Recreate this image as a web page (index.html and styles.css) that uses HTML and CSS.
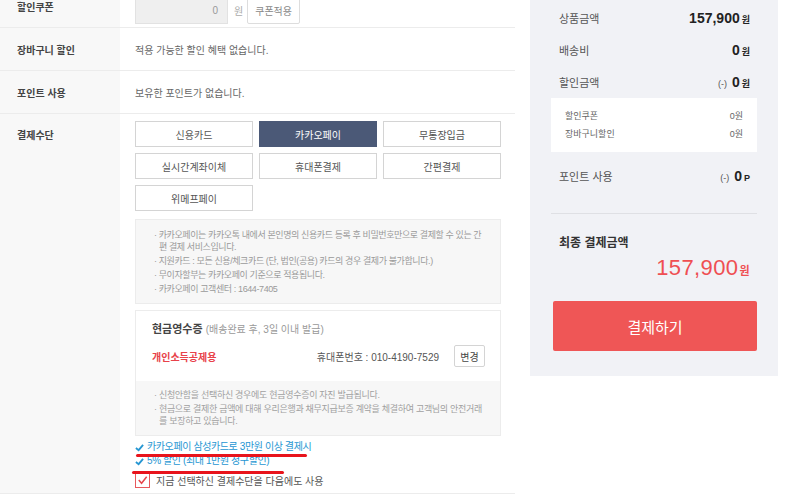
FILE: index.html
```html
<!DOCTYPE html>
<html lang="ko">
<head>
    <meta charset="UTF-8">
    <title>주문서 작성</title>
    <link rel="stylesheet" href="styles.css">
</head>
<body>
    <div class="page">
        <!-- 주문 정보 -->
        <div class="order">
            <div class="row">
                <div class="row-label">할인쿠폰</div>
                <div class="row-body">
                    <span class="coupon-input">0</span>
                    <span class="unit">원</span>
                    <button class="btn-small">쿠폰적용</button>
                </div>
            </div>
            <div class="row">
                <div class="row-label">장바구니 할인</div>
                <div class="row-body text">적용 가능한 할인 혜택 없습니다.</div>
            </div>
            <div class="row">
                <div class="row-label">포인트 사용</div>
                <div class="row-body text">보유한 포인트가 없습니다.</div>
            </div>
            <div class="row pay-row">
                <div class="row-label">결제수단</div>
                <div class="row-body pay-body">
                    <div class="pay-grid">
                        <button class="pay-btn">신용카드</button>
                        <button class="pay-btn active">카카오페이</button>
                        <button class="pay-btn">무통장입금</button>
                        <button class="pay-btn">실시간계좌이체</button>
                        <button class="pay-btn">휴대폰결제</button>
                        <button class="pay-btn">간편결제</button>
                        <button class="pay-btn">위메프페이</button>
                    </div>

                    <ul class="info-box">
                        <li>· 카카오페이는 카카오톡 내에서 본인명의 신용카드 등록 후 비밀번호만으로 결제할 수 있는 간편 결제 서비스입니다.</li>
                        <li>· 지원카드 : 모든 신용/체크카드 (단, 법인(공용) 카드의 경우 결제가 불가합니다.)</li>
                        <li>· 무이자할부는 카카오페이 기준으로 적용됩니다.</li>
                        <li>· 카카오페이 고객센터 : 1644-7405</li>
                    </ul>

                    <div class="receipt">
                        <div class="receipt-top">
                            <div class="receipt-title">현금영수증 <span>(배송완료 후, 3일 이내 발급)</span></div>
                            <div class="receipt-line">
                                <span class="receipt-type">개인소득공제용</span>
                                <span class="receipt-phone">휴대폰번호 : 010-4190-7529</span>
                                <button class="btn-change">변경</button>
                            </div>
                        </div>
                        <ul class="receipt-notes">
                            <li>· 신청안함을 선택하신 경우에도 현금영수증이 자진 발급됩니다.</li>
                            <li>· 현금으로 결제한 금액에 대해 우리은행과 채무지급보증 계약을 체결하여 고객님의 안전거래를 보장하고 있습니다.</li>
                        </ul>
                    </div>

                    <div class="promo">
                        <p><svg class="tick" viewBox="0 0 10 10"><path d="M1 5.5 L4 8 L9 2" /></svg>카카오페이 삼성카드로 3만원 이상 결제시</p>
                        <p><svg class="tick" viewBox="0 0 10 10"><path d="M1 5.5 L4 8 L9 2" /></svg>5% 할인 (최대 1만원 청구할인)</p>
                        <span class="mark mark-1"></span>
                        <span class="mark mark-2"></span>
                    </div>
                    <label class="save-check">
                        <span class="checkbox"><svg viewBox="0 0 14 14"><path d="M3 6.5 L6 10 L11.5 3" /></svg></span>
                        지금 선택하신 결제수단을 다음에도 사용
                    </label>
                </div>
            </div>
        </div>

        <!-- 결제 금액 -->
        <aside class="summary">
            <div class="sum-row">
                <span class="sum-label">상품금액</span>
                <span class="sum-value">157,900<small>원</small></span>
            </div>
            <div class="sum-row">
                <span class="sum-label">배송비</span>
                <span class="sum-value">0<small>원</small></span>
            </div>
            <div class="sum-row">
                <span class="sum-label">할인금액</span>
                <span class="sum-value"><em>(-)</em>0<small>원</small></span>
            </div>
            <div class="sum-detail">
                <div class="detail-row"><span>할인쿠폰</span><span>0원</span></div>
                <div class="detail-row"><span>장바구니할인</span><span>0원</span></div>
            </div>
            <div class="sum-row point-row">
                <span class="sum-label">포인트 사용</span>
                <span class="sum-value"><em>(-)</em>0<small>P</small></span>
            </div>
            <div class="total">
                <div class="total-label">최종 결제금액</div>
                <div class="total-value">157,900<small>원</small></div>
            </div>
            <button class="pay-submit">결제하기</button>
        </aside>
    </div>
</body>
</html>
```

FILE: styles.css
```css
body {
    margin: 0;
    background-color: #fff;
    font-family: "Liberation Sans", "Noto Sans CJK KR", sans-serif;
    color: #555;
    overflow: hidden;
}

.page {
    display: flex;
    align-items: flex-start;
    gap: 15px;
}

button {
    font-family: inherit;
    cursor: pointer;
}

/* 주문 정보 */
.order {
    width: 515px;
    margin-top: -15px; /* 스크롤된 상태 */
}

.row {
    display: flex;
    border-bottom: 1px solid #ececec;
}

.row-label {
    width: 120px;
    box-sizing: border-box;
    padding-left: 17px;
    background-color: #f8f8f8;
    font-size: 10px;
    font-weight: bold;
    color: #444;
    display: flex;
    align-items: center;
}

.row-body {
    flex: 1;
    height: 42px;
    box-sizing: border-box;
    padding: 0 14px 0 15px;
    display: flex;
    align-items: center;
}

.row-body.text {
    font-size: 10px;
    color: #666;
}

.coupon-input {
    width: 93px;
    height: 26px;
    box-sizing: border-box;
    padding-right: 9px;
    margin-top: 9px;
    background-color: #efefef;
    border: 1px solid #e2e2e2;
    font-size: 10px;
    color: #999;
    line-height: 24px;
    text-align: right;
}

.unit {
    margin: 9px 4px 0 6px;
    font-size: 10px;
    color: #aaa;
}

.btn-small {
    height: 26px;
    margin-top: 9px;
    padding: 0 7px;
    background-color: #fff;
    border: 1px solid #ddd;
    border-radius: 2px;
    font-size: 10px;
    color: #888;
}

/* 결제수단 */
.pay-row .row-label {
    align-items: flex-start;
    padding-top: 13px;
}

.pay-body {
    height: auto;
    display: block;
    padding-top: 7px;
    padding-bottom: 5px;
}

.pay-grid {
    display: grid;
    grid-template-columns: repeat(3, 1fr);
    gap: 6px;
}

.pay-btn {
    height: 26px;
    background-color: #fff;
    border: 1px solid #d4d4d4;
    font-size: 10px;
    color: #555;
}

.pay-btn.active {
    background-color: #4b5977;
    border-color: #4b5977;
    color: #fff;
}

.info-box {
    list-style: none;
    margin: 8px 0 0;
    padding: 9px 14px 8px 18px;
    background-color: #f7f7f7;
    border: 1px solid #ececec;
    font-size: 9px;
    line-height: 12px;
    color: #9a9a9a;
    letter-spacing: -0.4px;
}

.info-box li,
.receipt-notes li {
    padding-left: 5px;
    text-indent: -5px;
    margin-bottom: 2px;
}

.info-box li:last-child,
.receipt-notes li:last-child {
    margin-bottom: 0;
}

.receipt {
    margin-top: 6px;
    border: 1px solid #ececec;
}

.receipt-top {
    padding: 9px 15px 14px 16px;
}

.receipt-title {
    font-size: 11px;
    font-weight: bold;
    color: #444;
}

.receipt-title span {
    font-weight: normal;
    color: #999;
    font-size: 10px;
}

.receipt-line {
    display: flex;
    align-items: center;
    margin-top: 9px;
}

.receipt-type {
    flex: 1;
    font-size: 10px;
    font-weight: bold;
    color: #e8424a;
}

.receipt-phone {
    font-size: 10px;
    color: #555;
}

.btn-change {
    width: 31px;
    height: 22px;
    margin-left: 15px;
    padding: 0;
    background-color: #fff;
    border: 1px solid #d4d4d4;
    border-radius: 2px;
    font-size: 10px;
    color: #444;
}

.receipt-notes {
    list-style: none;
    margin: 0;
    padding: 8px 16px 8px 18px;
    background-color: #f7f7f7;
    font-size: 9px;
    line-height: 12px;
    color: #a0a0a0;
    letter-spacing: -0.3px;
}

/* 프로모션 안내 */
.promo {
    position: relative;
    padding-top: 4px;
    font-size: 10px;
    color: #2696d2;
    letter-spacing: -0.4px;
}

.promo p {
    margin: 0;
    line-height: 14px;
    display: flex;
    align-items: center;
}

.tick {
    width: 9px;
    height: 9px;
    margin-right: 3px;
    fill: none;
    stroke: #2696d2;
    stroke-width: 2;
}

.mark {
    position: absolute;
    height: 3px;
    background-color: #e8141c;
    border-radius: 2px;
}

.mark-1 {
    left: 1px;
    top: 18px;
    width: 171px;
}

.mark-2 {
    left: -3px;
    top: 35px;
    width: 152px;
}

.save-check {
    display: flex;
    align-items: center;
    margin-top: 5px;
    font-size: 10px;
    color: #555;
}

.checkbox {
    width: 13px;
    height: 13px;
    margin-right: 6px;
    border: 1px solid #e8585c;
    background-color: #fff;
}

.checkbox svg {
    display: block;
    width: 13px;
    height: 13px;
    fill: none;
    stroke: #e6454b;
    stroke-width: 1.6;
}

/* 결제 금액 */
.summary {
    width: 248px;
    height: 376px;
    box-sizing: border-box;
    padding: 2px 21px 0;
    background-color: #f1f2f6;
}

.sum-row {
    height: 32px;
    padding: 0 7px 0 8px;
    display: flex;
    justify-content: space-between;
    align-items: center;
}

.sum-label {
    font-size: 11px;
    color: #555;
}

.sum-value {
    font-size: 14px;
    font-weight: bold;
    color: #222;
}

.sum-value small {
    font-size: 9px;
    margin-left: 2px;
}

.sum-value em {
    font-style: normal;
    font-weight: normal;
    font-size: 9px;
    color: #555;
    margin-right: 5px;
}

.sum-detail {
    background-color: #fff;
    padding: 9px 14px 9px 14px;
}

.detail-row {
    display: flex;
    justify-content: space-between;
    line-height: 18px;
    font-size: 9px;
    color: #666;
}

.point-row {
    height: 24px;
    padding-top: 12px;
    padding-bottom: 25px;
    border-bottom: 1px solid #dfe0e4;
}

.total {
    padding: 20px 7px 0 8px;
}

.total-label {
    font-size: 12px;
    font-weight: bold;
    color: #333;
    line-height: 18px;
}

.total-value {
    margin-top: 4px;
    text-align: right;
    font-size: 22px;
    line-height: 24px;
    letter-spacing: 0.4px;
    color: #ef4f52;
}

.total-value small {
    font-size: 11px;
    font-weight: bold;
    margin-left: 1px;
}

.pay-submit {
    display: block;
    width: 204px;
    height: 50px;
    margin: 18px 0 0 2px;
    background-color: #ef5656;
    border: none;
    border-radius: 2px;
    font-size: 15px;
    color: #fff;
}
```
